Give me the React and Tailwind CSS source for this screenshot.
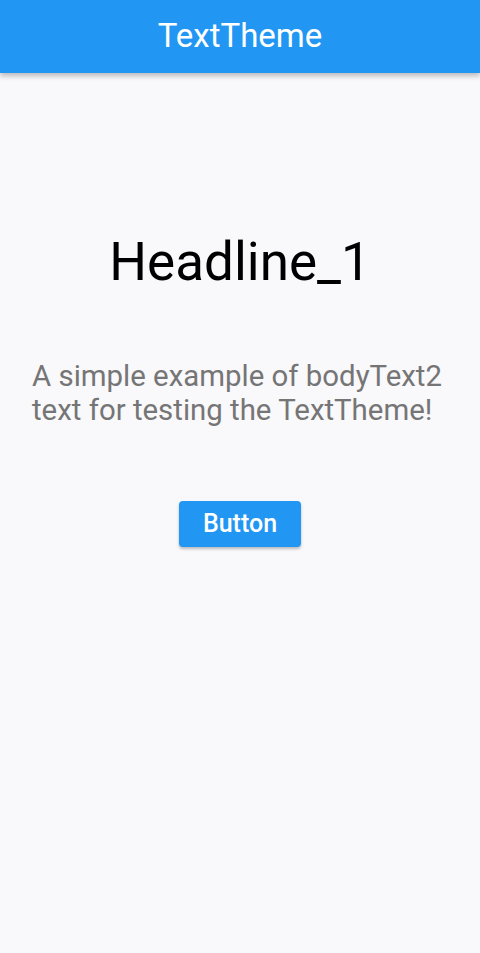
export default function App() {
  return (
    <div className="w-[480px] h-[953px] bg-[#f9f8fb] flex flex-col" style={{ fontFamily: "Roboto, 'Noto Sans', sans-serif" }}>
      <div className="h-[73px] bg-[#2196f3] flex items-center justify-center shadow-[0_3px_5px_rgba(0,0,0,0.25)] z-10">
        <span className="text-white text-[33px] leading-none -mt-[3px]">TextTheme</span>
      </div>
      <div className="flex flex-col items-center">
        <div className="mt-[155px] text-black text-[53px] leading-[68px]">Headline_1</div>
        <div className="mt-[63px] px-[32px] w-full text-[#757575] text-[29.4px] leading-[34px]">
          A simple example of bodyText2 text for testing the TextTheme!
        </div>
        <button className="mt-[74px] w-[122px] h-[46px] rounded-[4px] bg-[#2196f3] text-white text-[25px] font-medium shadow-[0_2px_3px_rgba(0,0,0,0.25)]">
          Button
        </button>
      </div>
    </div>
  );
}
